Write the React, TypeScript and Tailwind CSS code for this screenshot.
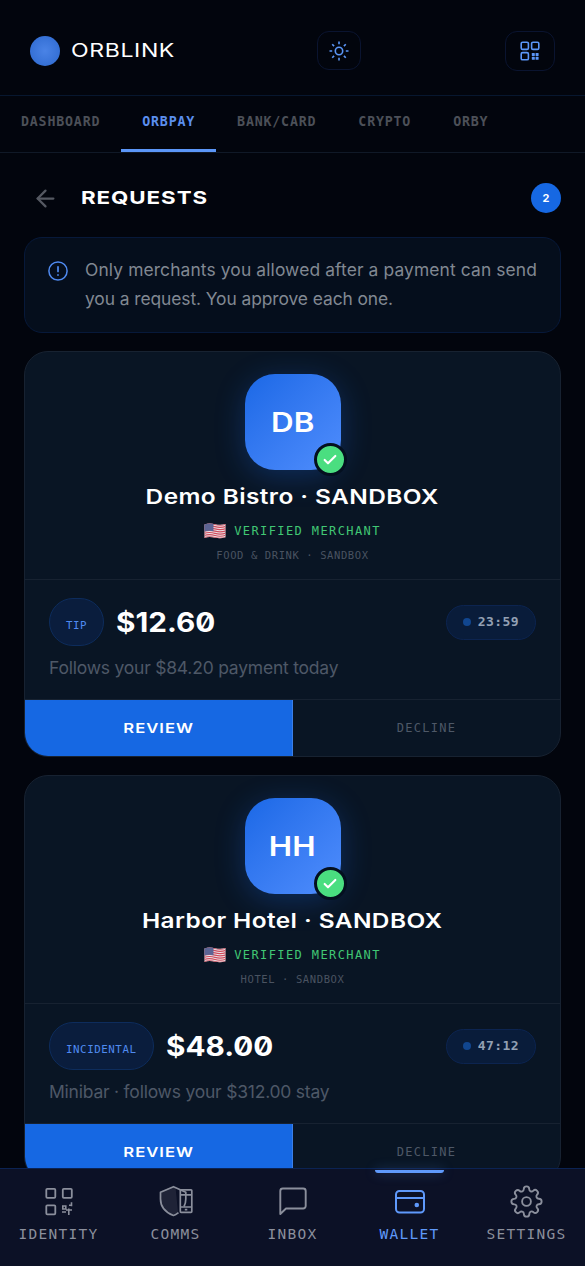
import type { ReactNode } from "react";
import { ArrowLeft, Check } from "lucide-react";

const tabs = ["DASHBOARD", "ORBPAY", "BANK/CARD", "CRYPTO", "ORBY"];

type Request = {
  initials: string;
  name: string;
  category: string;
  kind: string;
  amount: string;
  note: string;
  timer: string;
};

const requests: Request[] = [
  {
    initials: "DB",
    name: "Demo Bistro · SANDBOX",
    category: "FOOD & DRINK · SANDBOX",
    kind: "TIP",
    amount: "$12.60",
    note: "Follows your $84.20 payment today",
    timer: "23:59",
  },
  {
    initials: "HH",
    name: "Harbor Hotel · SANDBOX",
    category: "HOTEL · SANDBOX",
    kind: "INCIDENTAL",
    amount: "$48.00",
    note: "Minibar · follows your $312.00 stay",
    timer: "47:12",
  },
];

function SunIcon() {
  return (
    <svg viewBox="0 0 20 20" className="w-5 h-5" fill="none" stroke="currentColor" strokeWidth="1.6">
      <circle cx="10" cy="10" r="3.7" />
      <path d="M10 .5v2.700M10 16.800v2.700M.5 10h2.700M16.800 10h2.700M3.200 3.200l1.900 1.900M14.900 14.900l1.900 1.900M3.200 16.800l1.900-1.900M14.900 5.100l1.900-1.900" />
    </svg>
  );
}

function QrIcon() {
  return (
    <svg viewBox="0 0 20 20" className="w-5 h-5" fill="none" stroke="currentColor" strokeWidth="1.6">
      <rect x="1.2" y="1.2" width="7.2" height="7.2" rx="1.4" />
      <rect x="11.600" y="1.2" width="7.2" height="7.2" rx="1.4" />
      <rect x="1.2" y="11.600" width="7.2" height="7.2" rx="1.4" />
      <g fill="currentColor" stroke="none">
        <rect x="11.800" y="12" width="3" height="3" rx="0.6" />
        <rect x="15.600" y="12" width="3" height="3" rx="0.6" />
        <rect x="11.800" y="15.800" width="3" height="3" rx="0.6" />
        <rect x="15.600" y="15.800" width="3" height="3" rx="0.6" />
      </g>
    </svg>
  );
}

function AlertIcon() {
  return (
    <svg viewBox="0 0 20 20" className="w-5 h-5 mt-[5px] shrink-0" fill="none" stroke="currentColor" strokeWidth="1.500" strokeLinecap="round">
      <circle cx="10" cy="10" r="9.100" />
      <path d="M10 5.800v4.600M10 13.900v.2" strokeWidth="1.700" />
    </svg>
  );
}

function Flag() {
  return (
    <svg viewBox="0 0 22 16" className="w-[22px] h-4">
      <clipPath id="wave">
        <path d="M.5 1.400C4 .2 7.500 .4 11 1.200s7 .9 10.500-.2v13.200c-3.500 1.300-7 1.200-10.500.5s-7-1.100-10.500.3z" />
      </clipPath>
      <g clipPath="url(#wave)">
        <rect width="22" height="16" fill="#ece6ea" />
        <g fill="none" stroke="#cf4b5c" strokeWidth="1.2">
          <path d="M0 1.500q5.500-1.600 11 0t11-.3" />
          <path d="M0 3.700q5.500-1.600 11 0t11-.3" />
          <path d="M0 5.900q5.500-1.600 11 0t11-.3" />
          <path d="M0 8.100q5.500-1.600 11 0t11-.3" />
          <path d="M0 10.300q5.500-1.600 11 0t11-.3" />
          <path d="M0 12.500q5.500-1.600 11 0t11-.3" />
          <path d="M0 14.700q5.500-1.600 11 0t11-.3" />
        </g>
        <path d="M0 0h9.500v8.200Q5 7 0 8.500z" fill="#5c6494" />
      </g>
    </svg>
  );
}

function IdentityIcon() {
  return (
    <svg viewBox="0 0 32 32" className="w-8 h-8" fill="none" stroke="currentColor" strokeWidth="1.8">
      <rect x="3.300" y="3.800" width="9" height="9" rx="1" />
      <rect x="19.800" y="3.800" width="9" height="9" rx="1" />
      <rect x="3.300" y="20.300" width="9" height="9" rx="1" />
      <path d="M19.800 21h3v3h-3zM19 27h4M26 20.300h3M28.500 17.300v4M25.800 23.500v6.500M23 25h6" strokeWidth="1.600" />
    </svg>
  );
}

function CommsIcon() {
  return (
    <svg viewBox="0 0 34 32" className="w-[34px] h-8" fill="none" stroke="currentColor" strokeWidth="1.7" strokeLinejoin="round">
      <path d="M14 1.500v28C6 26 1.500 21 1.500 14V6.500z" fill="currentColor" fillOpacity="0.15" stroke="none" />
      <path d="M14 1.500l2.500.8 2.500 25-5 2.200z" fill="currentColor" fillOpacity="0.15" stroke="none" />
      <path d="M19.500 27.700Q16.500 30 14.500 30.500 1.500 25.500 1.500 14V7.200L14.500 1.700l12.300 5.500V14q0 4-1.800 7.500" />
      <rect x="21.300" y="4.800" width="11.500" height="22.500" rx="0.8" />
      <path d="M21.300 9.800h11.500M21.300 22h11.500M25.800 24.700h2.500" />
    </svg>
  );
}

function InboxIcon() {
  return (
    <svg viewBox="0 0 32 32" className="w-8 h-8" fill="none" stroke="currentColor" strokeWidth="1.9" strokeLinejoin="round">
      <path d="M3.300 29V6a2.500 2.500 0 0 1 2.500-2.500h20.400a2.500 2.500 0 0 1 2.500 2.500V21a2.500 2.500 0 0 1-2.500 2.500H9z" />
    </svg>
  );
}

function WalletIcon() {
  return (
    <svg viewBox="0 0 32 32" className="w-8 h-8" fill="none" stroke="currentColor" strokeWidth="2">
      <rect x="2" y="6" width="28" height="21.500" rx="3.500" />
      <path d="M2 13h28" />
      <circle cx="22.800" cy="20" r="2.300" fill="currentColor" stroke="none" />
    </svg>
  );
}

function SettingsIcon() {
  return (
    <svg viewBox="0 0 24 24" className="w-[33px] h-[33px]" fill="none" stroke="currentColor" strokeWidth="1.350" strokeLinejoin="round">
      <circle cx="12" cy="12" r="3.200" />
      <path d="M19.400 15a1.650 1.650 0 0 0 .33 1.820l.06.06a2 2 0 0 1-2.830 2.830l-.06-.06a1.650 1.650 0 0 0-1.820-.33 1.650 1.650 0 0 0-1 1.510V21a2 2 0 0 1-4 0v-.09A1.650 1.650 0 0 0 9 19.400a1.650 1.650 0 0 0-1.820.33l-.06.06a2 2 0 0 1-2.830-2.830l.06-.06a1.650 1.650 0 0 0 .33-1.820 1.650 1.650 0 0 0-1.510-1H3a2 2 0 0 1 0-4h.09A1.650 1.650 0 0 0 4.600 9a1.650 1.650 0 0 0-.33-1.820l-.06-.06a2 2 0 0 1 2.830-2.830l.06.06a1.650 1.650 0 0 0 1.820.33H9a1.650 1.650 0 0 0 1-1.510V3a2 2 0 0 1 4 0v.09a1.650 1.650 0 0 0 1 1.510 1.650 1.650 0 0 0 1.820-.33l.06-.06a2 2 0 0 1 2.830 2.830l-.06.06a1.650 1.650 0 0 0-.33 1.820V9a1.650 1.650 0 0 0 1.510 1H21a2 2 0 0 1 0 4h-.09a1.650 1.650 0 0 0-1.510 1z" />
    </svg>
  );
}

function Header() {
  return (
    <header className="h-24 shrink-0 px-[30px] pt-1.5 flex items-center justify-between border-b border-[#07172f]">
      <div className="flex items-center gap-[11px] w-[142px]">
        <div className="w-[30px] h-[30px] rounded-full shrink-0 bg-[radial-gradient(circle,#4a83e6_0%,#2c68ce_100%)]" />
        <h1 className="origin-left scale-x-[1.24] text-[18.6px] leading-none tracking-[0.5px] text-white">
          ORBLINK
        </h1>
      </div>
      <button className="w-11 h-[39px] rounded-xl border border-[#0a1430] flex items-center justify-center text-[#5b96f7]">
        <SunIcon />
      </button>
      <button className="w-[50px] h-10 rounded-xl border border-[#0a1430] flex items-center justify-center text-[#5b96f7]">
        <QrIcon />
      </button>
    </header>
  );
}

function Tabs() {
  return (
    <nav className="h-[57px] shrink-0 flex border-b border-[#101927] font-['DejaVu_Sans_Mono',monospace] text-[13.3px] font-bold tracking-[0.8px]">
      {tabs.map((tab) => (
        <button
          key={tab}
          className={
            tab === "ORBPAY"
              ? "px-[21px] pb-0.5 border-b-3 border-[#5b96f7] text-[#5b8fee]"
              : "px-[21px] pb-0.5 border-b-3 border-transparent text-[#4c5058]"
          }
        >
          {tab}
        </button>
      ))}
    </nav>
  );
}

function RequestCard({ request }: { request: Request }) {
  return (
    <article className="shrink-0 rounded-3xl border-[1.5px] border-[#172231] bg-[#091524] overflow-hidden">
      <div className="h-[228px] pt-[22px] flex flex-col items-center border-b border-[#172231]">
        <div className="relative w-24 h-24 rounded-[30px] bg-linear-135 from-[#1a68e6] to-[#4f8dfd] shadow-[0_6px_30px_rgba(26,104,230,0.3)] flex items-center justify-center">
          <span className="pt-0.5 scale-x-[1.16] text-[27px] font-semibold text-white">
            {request.initials}
          </span>
          <div className="absolute -right-[6px] -bottom-[6px] w-[33px] h-[33px] rounded-full border-3 border-[#04101f] bg-[#4ade80] flex items-center justify-center">
            <Check className="w-4 h-4 text-white" strokeWidth={3.2} />
          </div>
        </div>
        <h3 className="mt-3 h-[30px] leading-[30px] scale-x-[1.19] text-[20.5px] font-semibold tracking-[0.35px] text-white whitespace-nowrap">
          {request.name}
        </h3>
        <div className="mt-[9px] h-5 flex items-center gap-2 font-['DejaVu_Sans_Mono',monospace] text-xs tracking-[1.4px] text-[#41c774]">
          <Flag />
          <span>VERIFIED MERCHANT</span>
        </div>
        <p className="mt-[6px] h-4 leading-4 font-['DejaVu_Sans_Mono',monospace] text-[10.5px] tracking-[0.6px] text-[#4a5361]">
          {request.category}
        </p>
      </div>

      <div className="h-[119px] px-6 pt-[18px]">
        <div className="flex items-center">
          <span className="h-12 px-4 pt-2 flex items-center rounded-3xl border border-[#0d2c5c] bg-[#0a1d3d] font-['DejaVu_Sans_Mono',monospace] text-[10.8px] tracking-[0.55px] text-[#4f8af0]">
            {request.kind}
          </span>
          <span className="ml-3 origin-left scale-x-[1.12] text-[26.5px] leading-none font-bold slashed-zero text-white">
            {request.amount}
          </span>
          <span className="ml-auto h-[35px] px-4 flex items-center gap-[7px] rounded-full border-[1.5px] border-[#0c2450] bg-[#091c3a] font-['DejaVu_Sans_Mono',monospace] text-[13px] font-bold tracking-[0.4px] text-[#93a0b4]">
            <span className="w-2 h-2 rounded-full bg-[#11468f]" />
            {request.timer}
          </span>
        </div>
        <p className="mt-[9px] leading-[26px] text-[17.5px] tracking-[-0.22px] text-[#4e5867]">{request.note}</p>
      </div>

      <div className="h-[57px] flex border-t border-[#172231]">
        <button className="flex-1 pb-[3px] bg-[#1668e3] border-r border-[#3b7fe8] text-white">
          <span className="inline-block scale-x-[1.28] text-[13px] font-semibold tracking-[0.8px]">
            REVIEW
          </span>
        </button>
        <button className="flex-1 font-['DejaVu_Sans_Mono',monospace] text-xs tracking-[1.3px] text-[#4e5867]">
          DECLINE
        </button>
      </div>
    </article>
  );
}

function NavItem({ label, active, children }: { label: string; active?: boolean; children: ReactNode }) {
  return (
    <button
      className={
        active
          ? "relative flex-1 pt-4 flex flex-col items-center text-[#5f99fb]"
          : "relative flex-1 pt-4 flex flex-col items-center text-[#8b8f9c]"
      }
    >
      {active && (
        <span className="absolute top-px w-[69px] h-[3px] rounded-b-sm bg-[#5f99fb] shadow-[0_0_12px_rgba(95,153,251,0.4)]" />
      )}
      <span className="h-8 flex items-center">{children}</span>
      <span className="mt-[7px] leading-5 font-['DejaVu_Sans_Mono',monospace] text-[14.5px] tracking-[1.25px]">
        {label}
      </span>
    </button>
  );
}

export default function App() {
  return (
    <div className="w-[585px] h-[1266px] flex flex-col overflow-hidden bg-[#02050d] font-['Inter',sans-serif] antialiased">
      <Header />
      <Tabs />

      <main className="flex-1 min-h-0 overflow-hidden px-6 flex flex-col">
        <div className="h-[84px] shrink-0 pt-1.5 pl-2 flex items-center">
          <ArrowLeft className="w-[27px] h-[27px] text-[#555962]" strokeWidth={2} />
          <h2 className="ml-[22px] mb-0.5 origin-left scale-x-[1.24] text-[18px] font-bold tracking-[0.75px] text-white">
            REQUESTS
          </h2>
          <span className="ml-auto w-[30px] h-[30px] rounded-full bg-[#1668e3] flex items-center justify-center text-[11px] font-bold text-white">
            2
          </span>
        </div>

        <div className="h-24 shrink-0 px-[23px] pt-[18px] flex gap-[17px] rounded-[18px] border-[1.5px] border-[#07193a] bg-[#050e1c] text-[#4f8af0]">
          <AlertIcon />
          <p className="text-[17.4px] leading-[28.5px] tracking-[0.12px] text-[#818892] whitespace-nowrap">
            Only merchants you allowed after a payment can send
            <br />
            <span className="tracking-[-0.08px]">you a request. You approve each one.</span>
          </p>
        </div>

        <div className="mt-[18px] flex flex-col gap-[18px]">
          {requests.map((request) => (
            <RequestCard key={request.initials} request={request} />
          ))}
        </div>
      </main>

      <nav className="h-[98px] shrink-0 flex border-t border-[#0b2353] bg-[#0c1126]">
        <NavItem label="IDENTITY">
          <IdentityIcon />
        </NavItem>
        <NavItem label="COMMS">
          <CommsIcon />
        </NavItem>
        <NavItem label="INBOX">
          <InboxIcon />
        </NavItem>
        <NavItem label="WALLET" active>
          <WalletIcon />
        </NavItem>
        <NavItem label="SETTINGS">
          <SettingsIcon />
        </NavItem>
      </nav>
    </div>
  );
}
